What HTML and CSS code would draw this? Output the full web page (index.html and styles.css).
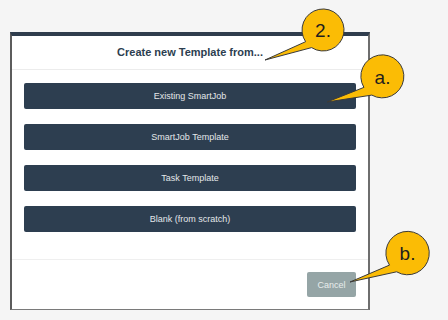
FILE: index.html
```html
<!DOCTYPE html>
<html>
<head>
<meta charset="utf-8">
<link rel="stylesheet" href="styles.css">
</head>
<body>
<div class="screen">
  <div class="modal">
    <div class="modal-header">Create new Template from...</div>
    <div class="modal-body">
      <button class="opt">Existing SmartJob</button>
      <button class="opt">SmartJob Template</button>
      <button class="opt">Task Template</button>
      <button class="opt">Blank (from scratch)</button>
    </div>
    <div class="modal-footer">
      <button class="cancel">Cancel</button>
    </div>
  </div>
</div>
<svg class="callouts" width="448" height="320" viewBox="0 0 448 320">
  <g class="bubble">
    <path d="M311.6 47.6 L265 60 L305.6 41.7 A21 21 0 1 1 311.6 47.6 Z"/>
    <text x="323" y="37">2.</text>
  </g>
  <g class="bubble">
    <path d="M371.8 95.1 L327 102 L363.9 87.4 A21.5 21.5 0 1 1 371.8 95.1 Z"/>
    <text x="382.5" y="83.5">a.</text>
  </g>
  <g class="bubble">
    <path d="M396.6 271.8 L350 282 L389.5 265.1 A21.7 21.7 0 1 1 396.6 271.8 Z"/>
    <text x="407.5" y="260">b.</text>
  </g>
</svg>
</body>
</html>
```
FILE: styles.css
```css
html, body {
  margin: 0;
  padding: 0;
}
body {
  background: #f5f5f5;
  width: 448px;
  height: 320px;
  overflow: hidden;
  position: relative;
  font-family: "Liberation Sans", Arial, sans-serif;
}
.screen {
  margin: 32px 0 0 10px;
  width: 356px;
  height: 273px;
  border-top: 4px solid #2f3d4d;
  border-left: 2px solid #5c5c5c;
  border-right: 2px solid #6e6e6e;
  border-bottom: 1px solid #7a7a7a;
  background: #fff;
}
.modal {
  display: flex;
  flex-direction: column;
  height: 100%;
  background: #fff;
}
.modal-header {
  height: 33px;
  line-height: 33px;
  text-align: center;
  font-weight: bold;
  font-size: 11px;
  color: #2c3e50;
  border-bottom: 1px solid #ececec;
}
.modal-body {
  display: flex;
  flex-direction: column;
  gap: 15px;
  padding: 13px 12px 27px 12px;
  border-bottom: 1px solid #efefef;
}
.opt {
  height: 26px;
  border: none;
  border-radius: 2px;
  background: #2d3e50;
  color: #e4e7ea;
  font-family: "Liberation Sans", Arial, sans-serif;
  font-size: 9px;
  padding: 0;
}
.modal-footer {
  display: flex;
  justify-content: flex-end;
  padding: 12px 12px 0 0;
}
.cancel {
  width: 49px;
  height: 25px;
  border: none;
  border-radius: 2px;
  background: #95a5a6;
  color: #e8eded;
  font-family: "Liberation Sans", Arial, sans-serif;
  font-size: 9px;
  padding: 0;
}
.callouts {
  position: absolute;
  left: 0;
  top: 0;
}
.bubble path {
  fill: #fbbc05;
  stroke: #3a3a3a;
  stroke-width: 1;
  stroke-linejoin: miter;
}
.bubble text {
  font-family: "Liberation Sans", Arial, sans-serif;
  font-size: 19px;
  fill: #1e1e1e;
  text-anchor: middle;
}
```
